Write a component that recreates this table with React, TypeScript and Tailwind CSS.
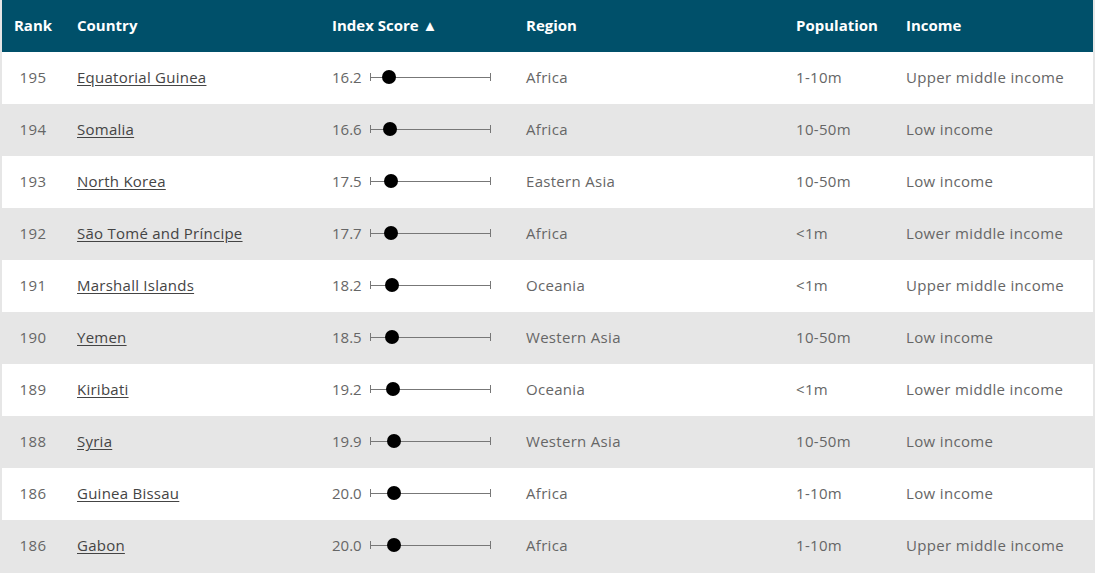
import React from "react"

type Row = {
  rank: number
  country: string
  score: number
  region: string
  population: string
  income: string
}

const rows: Row[] = [
  { rank: 195, country: "Equatorial Guinea", score: 16.2, region: "Africa", population: "1-10m", income: "Upper middle income" },
  { rank: 194, country: "Somalia", score: 16.6, region: "Africa", population: "10-50m", income: "Low income" },
  { rank: 193, country: "North Korea", score: 17.5, region: "Eastern Asia", population: "10-50m", income: "Low income" },
  { rank: 192, country: "São Tomé and Príncipe", score: 17.7, region: "Africa", population: "<1m", income: "Lower middle income" },
  { rank: 191, country: "Marshall Islands", score: 18.2, region: "Oceania", population: "<1m", income: "Upper middle income" },
  { rank: 190, country: "Yemen", score: 18.5, region: "Western Asia", population: "10-50m", income: "Low income" },
  { rank: 189, country: "Kiribati", score: 19.2, region: "Oceania", population: "<1m", income: "Lower middle income" },
  { rank: 188, country: "Syria", score: 19.9, region: "Western Asia", population: "10-50m", income: "Low income" },
  { rank: 186, country: "Guinea Bissau", score: 20.0, region: "Africa", population: "1-10m", income: "Low income" },
  { rank: 186, country: "Gabon", score: 20.0, region: "Africa", population: "1-10m", income: "Upper middle income" },
]

const grid = "grid grid-cols-[75px_255px_194px_270px_110px_1fr] items-center pb-[2px]"

// score 0-100 drawn on a 120px track
function ScoreBar({ score }: { score: number }) {
  return (
    <span className="relative ml-[8px] inline-block h-[14px] w-[121px] align-middle">
      <span className="absolute left-0 right-0 top-[6.5px] h-px bg-[#777]" />
      <span className="absolute left-0 top-[3px] h-[8px] w-px bg-[#777]" />
      <span className="absolute right-0 top-[3px] h-[8px] w-px bg-[#777]" />
      <span
        className="absolute top-0 h-[14px] w-[14px] -translate-x-1/2 rounded-full bg-black"
        style={{ left: score * 1.2 }}
      />
    </span>
  )
}

export default function App() {
  return (
    <div className="min-h-[573px] bg-[#e6e6e6] px-[2px] font-['Open_Sans',sans-serif] text-[15px]">
      {/* Header */}
      <div className={`${grid} h-[52px] bg-[#00506a] font-bold text-white`}>
        <div className="w-[62px] text-center">Rank</div>
        <div>Country</div>
        <div>Index Score ▲</div>
        <div>Region</div>
        <div>Population</div>
        <div>Income</div>
      </div>

      {rows.map((r, i) => (
        <div
          key={r.country}
          className={`${grid} h-[52px] text-[#666] ${i % 2 === 0 ? "bg-white" : "bg-[#e6e6e6]"}`}
        >
          <div className="w-[62px] text-center tracking-[0.5px]">{r.rank}</div>
          <div className="tracking-[0.25px]">
            <a href="#" className="text-[#444] underline underline-offset-2">
              {r.country}
            </a>
          </div>
          <div className="flex items-center">
            <span>{r.score.toFixed(1)}</span>
            <ScoreBar score={r.score} />
          </div>
          <div className="tracking-[0.3px]">{r.region}</div>
          <div className="tracking-[0.3px]">{r.population}</div>
          <div className="tracking-[0.35px]">{r.income}</div>
        </div>
      ))}
    </div>
  )
}
